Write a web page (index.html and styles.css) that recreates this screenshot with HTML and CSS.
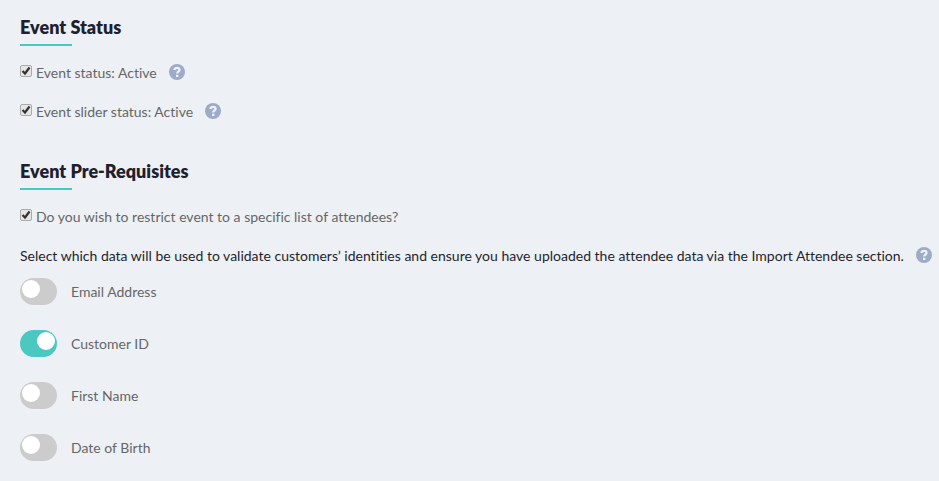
FILE: index.html
```html
<!DOCTYPE html>
<html lang="en">
<head>
<meta charset="utf-8">
<title>Event settings</title>
<link rel="stylesheet" href="styles.css">
</head>
<body>
<svg class="defs" aria-hidden="true"><symbol id="help" viewBox="0 0 16 16"><circle cx="8" cy="8" r="8" fill="#9cabc8"/><path d="M5.300 6C5.600 4.600 6.700 3.900 8.100 3.900S10.500 4.700 10.500 5.900C10.500 7.500 8.200 7.500 8.200 9.500" fill="none" stroke="#edf1f6" stroke-width="2.300"/><rect x="7" y="10.700" width="2.400" height="2.300" fill="#edf1f6"/></symbol></svg>
<main class="page">
<section class="section">
<h2 class="title">Event Status</h2>
<div class="row"><label class="check"><input type="checkbox" checked><span>Event status: Active</span></label><svg class="help"><use href="#help"/></svg></div>
<div class="row"><label class="check"><input type="checkbox" checked><span>Event slider status: Active</span></label><svg class="help"><use href="#help"/></svg></div>
</section>
<section class="section">
<h2 class="title">Event Pre-Requisites</h2>
<div class="row"><label class="check"><input type="checkbox" checked><span>Do you wish to restrict event to a specific list of attendees?</span></label></div>
<div class="row intro"><p>Select which data will be used to validate customers’ identities and ensure you have uploaded the attendee data via the Import Attendee section.</p><svg class="help"><use href="#help"/></svg></div>
<div class="toggles">
<label class="toggle"><input type="checkbox"><span>Email Address</span></label>
<label class="toggle"><input type="checkbox" checked><span>Customer ID</span></label>
<label class="toggle"><input type="checkbox"><span>First Name</span></label>
<label class="toggle"><input type="checkbox"><span>Date of Birth</span></label>
</div>
</section>
</main>
</body>
</html>
```
FILE: styles.css
```css
* { box-sizing: border-box; }
body { margin: 0; background: #edf1f6; color: #666; font: 14px/20px Lato, sans-serif; font-variant-ligatures: none; }
.defs { position: absolute; width: 0; height: 0; }
.page { padding: 15px 16px 20px 20px; }
.section + .section { margin-top: 37px; }
.title { margin: 0 0 17px; color: #1f1f2e; font-size: 18px; line-height: 24px; font-weight: 800; }
.title::after { content: ""; display: block; width: 52px; height: 2px; margin-top: 5px; background: #4cc8c2; }
.row { display: flex; align-items: center; gap: 12px; height: 20px; }
.row + .row { margin-top: 19px; }
.row p { margin: 0; white-space: nowrap; }
.intro { color: #1f1f2e; }
.check { display: flex; align-items: center; gap: 4px; }
.check input { appearance: none; width: 12px; height: 12px; margin: 0 0 4px; border: 1px solid #aaa; border-radius: 2px; background: #e6e6e6 url("data:image/svg+xml,%3Csvg xmlns='http://www.w3.org/2000/svg' viewBox='0 0 10 10'%3E%3Cpath d='M1.500 5L4 7.500L8.500 1.500' fill='none' stroke='%23333' stroke-width='2.200'/%3E%3C/svg%3E") center / 10px; }
.help { width: 16px; height: 16px; flex: none; margin-bottom: 2px; }
.toggles { display: grid; gap: 24px; margin-top: 11px; }
.toggle { display: flex; align-items: center; gap: 14px; height: 28px; }
.toggle input { appearance: none; width: 37px; height: 27px; margin: 0; border-radius: 14px; background: #ccc; padding: 2px; }
.toggle input::before { content: ""; display: block; width: 18px; height: 18px; border-radius: 50%; background: #fff; }
.toggle input:checked { background: #4cc8c2; }
.toggle input:checked::before { margin-left: auto; }
.toggle span { padding-top: 2px; }
```
